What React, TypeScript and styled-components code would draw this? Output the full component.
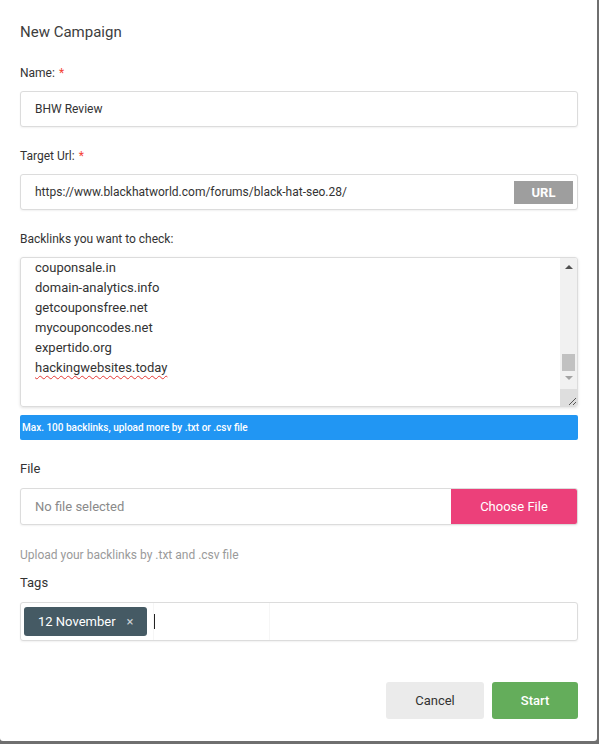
import React from "react";
import styled, { createGlobalStyle } from "styled-components";

const GlobalStyle = createGlobalStyle`
  html, body {
    margin: 0;
    padding: 0;
    background: #6f6f6f;
    font-family: Roboto, "Liberation Sans", Arial, sans-serif;
  }
  * { box-sizing: border-box; }
`;

const Modal = styled.div`
  width: 597px;
  height: 741px;
  background: #fff;
  border-radius: 0 0 3px 3px;
  padding: 22px 19px 0 20px;
  display: flex;
  flex-direction: column;
`;

const Title = styled.h2`
  margin: 0;
  font-size: 15px;
  font-weight: 400;
  line-height: 20px;
  color: #3d3d3d;
`;

const Form = styled.div`
  margin-top: 23px;
  display: flex;
  flex-direction: column;
`;

const Field = styled.div<{ $gap?: number }>`
  display: flex;
  flex-direction: column;
  margin-top: ${({ $gap }) => ($gap === undefined ? 21 : $gap)}px;
`;

const Label = styled.label<{ $big?: boolean }>`
  font-size: ${({ $big }) => ($big ? 13 : 12)}px;
  line-height: 16px;
  color: #333;
  margin-bottom: ${({ $big }) => ($big ? 11 : 10)}px;
`;

const Required = styled.span`
  color: #f44336;
  margin-left: 4px;
`;

const InputBox = styled.div<{ $h: number }>`
  height: ${({ $h }) => $h}px;
  border: 1px solid #dcdcdc;
  border-radius: 3px;
  background: #fff;
  box-shadow: 0 1px 2px rgba(0, 0, 0, 0.06);
  display: flex;
  align-items: center;
  overflow: hidden;
`;

const InputText = styled.span<{ $muted?: boolean }>`
  flex: 1;
  padding-left: 14px;
  font-size: ${({ $muted }) => ($muted ? 13 : 12)}px;
  color: ${({ $muted }) => ($muted ? "#8a8a8a" : "#333")};
  white-space: nowrap;
`;

const UrlButton = styled.div`
  width: 59px;
  height: 23px;
  margin-right: 4px;
  background: #9e9e9e;
  color: #fff;
  font-size: 13px;
  font-weight: 700;
  display: flex;
  align-items: center;
  justify-content: center;
`;

const TextArea = styled.div`
  height: 150px;
  border: 1px solid #dcdcdc;
  border-radius: 3px;
  box-shadow: 0 1px 3px rgba(0, 0, 0, 0.12);
  display: flex;
  overflow: hidden;
`;

const Lines = styled.div`
  flex: 1;
  padding: 0 14px;
  font-size: 13px;
  line-height: 20px;
  color: #333;
`;

const Line = styled.div<{ $typo?: boolean }>`
  span {
    text-decoration: ${({ $typo }) => ($typo ? "underline wavy #e53935" : "none")};
    text-decoration-thickness: 1px;
    text-underline-offset: 3px;
  }
`;

const ScrollBar = styled.div`
  width: 17px;
  background: #f1f1f1;
  display: flex;
  flex-direction: column;
  align-items: center;
`;

const Arrow = styled.div<{ $down?: boolean }>`
  margin-top: ${({ $down }) => ($down ? 5 : 7)}px;
  width: 0;
  height: 0;
  border-left: 4px solid transparent;
  border-right: 4px solid transparent;
  ${({ $down }) =>
    $down
      ? "border-top: 4px solid #a3a3a3;"
      : "border-bottom: 4px solid #505050;"}
`;

const Thumb = styled.div`
  margin-top: 85px;
  width: 13px;
  height: 17px;
  background: #c1c1c1;
`;

const Grip = styled.div`
  margin-top: auto;
  width: 17px;
  height: 17px;
  background: #dedede;
  display: flex;
  align-items: flex-end;
  justify-content: flex-end;
`;

const Notice = styled.div`
  margin-top: 8px;
  height: 25px;
  border-radius: 2px;
  background: #2196f3;
  color: #fff;
  font-size: 10px;
  font-weight: 500;
  padding-left: 2px;
  display: flex;
  align-items: center;
`;

const ChooseButton = styled.div`
  width: 126px;
  height: 100%;
  background: #ec407a;
  color: #fff;
  font-size: 13px;
  font-weight: 400;
  display: flex;
  align-items: center;
  justify-content: center;
`;

const Help = styled.div`
  margin-top: 22px;
  font-size: 12px;
  line-height: 16px;
  color: #9a9a9a;
`;

const Chip = styled.div`
  margin-left: 3px;
  height: 29px;
  width: 123px;
  padding-left: 14px;
  border-radius: 3px;
  background: #455a64;
  color: #fff;
  font-size: 13px;
  font-weight: 400;
  display: flex;
  align-items: center;
  gap: 11px;
`;

const ChipClose = styled.span`
  color: #c9d0d4;
  font-size: 13px;
`;

const TagEntry = styled.div`
  align-self: stretch;
  width: 117px;
  margin-left: 6px;
  border-right: 1px solid #f6f6f6;
  border-left: 1px solid #f6f6f6;
  display: flex;
  align-items: center;
`;

const Caret = styled.div`
  width: 1px;
  height: 15px;
  background: #222;
`;

const Footer = styled.div`
  margin-top: 41px;
  display: flex;
  justify-content: flex-end;
  gap: 8px;
`;

const Button = styled.button<{ $primary?: boolean }>`
  height: 37px;
  width: ${({ $primary }) => ($primary ? 86 : 98)}px;
  border: none;
  border-radius: 3px;
  font-family: inherit;
  font-size: 13px;
  font-weight: ${({ $primary }) => ($primary ? 500 : 400)};
  background: ${({ $primary }) => ($primary ? "#64ad5b" : "#ebebeb")};
  color: ${({ $primary }) => ($primary ? "#fff" : "#333")};
`;

const backlinks = [
  "couponsale.in",
  "domain-analytics.info",
  "getcouponsfree.net",
  "mycouponcodes.net",
  "expertido.org",
  "hackingwebsites.today",
];

export default function App() {
  return (
    <>
      <GlobalStyle />
      <Modal>
        <Title>New Campaign</Title>
        <Form>
          <Field $gap={0}>
            <Label>
              Name:<Required>*</Required>
            </Label>
            <InputBox $h={36}>
              <InputText>BHW Review</InputText>
            </InputBox>
          </Field>

          <Field>
            <Label>
              Target Url:<Required>*</Required>
            </Label>
            <InputBox $h={36}>
              <InputText>https://www.blackhatworld.com/forums/black-hat-seo.28/</InputText>
              <UrlButton>URL</UrlButton>
            </InputBox>
          </Field>

          <Field>
            <Label>Backlinks you want to check:</Label>
            <TextArea>
              <Lines>
                {backlinks.map((b) => (
                  <Line key={b} $typo={b === "hackingwebsites.today"}>
                    <span>{b}</span>
                  </Line>
                ))}
              </Lines>
              <ScrollBar>
                <Arrow />
                <Thumb />
                <Arrow $down />
                <Grip>
                  <svg width="10" height="10" viewBox="0 0 10 10">
                    <path d="M9 2 L2 9 M9 6 L6 9" stroke="#555" strokeWidth="1" />
                  </svg>
                </Grip>
              </ScrollBar>
            </TextArea>
            <Notice>Max. 100 backlinks, upload more by .txt or .csv file</Notice>
          </Field>

          <Field>
            <Label $big>File</Label>
            <InputBox $h={37}>
              <InputText $muted>No file selected</InputText>
              <ChooseButton>Choose File</ChooseButton>
            </InputBox>
          </Field>

          <Help>Upload your backlinks by .txt and .csv file</Help>

          <Field $gap={12}>
            <Label $big>Tags</Label>
            <InputBox $h={39}>
              <Chip>
                12 November
                <ChipClose>×</ChipClose>
              </Chip>
              <TagEntry>
                <Caret />
              </TagEntry>
            </InputBox>
          </Field>
        </Form>

        <Footer>
          <Button>Cancel</Button>
          <Button $primary>Start</Button>
        </Footer>
      </Modal>
    </>
  );
}
